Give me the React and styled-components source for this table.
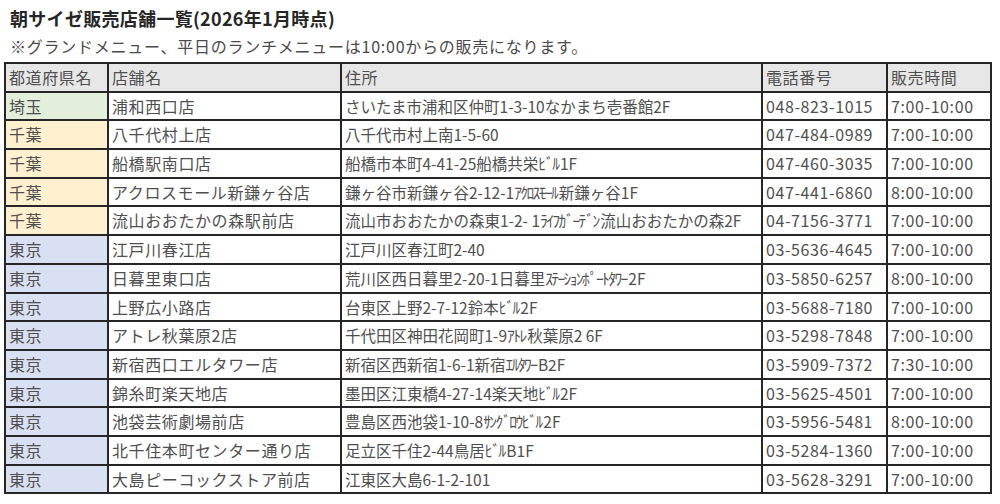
import React from "react";
import styled, { createGlobalStyle } from "styled-components";

const Global = createGlobalStyle`
  html, body { margin: 0; padding: 0; background: #ffffff; }
  body { font-family: "Noto Sans CJK JP", "Noto Sans", sans-serif; }
`;

const Page = styled.div`
  width: 1000px;
  height: 504px;
  box-sizing: border-box;
  padding: 6px 0 0 4px;
  overflow: hidden;
`;

const Title = styled.h1`
  margin: 0 0 0 6px;
  font-size: 18px;
  line-height: 24px;
  font-weight: 700;
  letter-spacing: 0.3px;
  color: #262626;
`;

const Note = styled.p`
  margin: 4px 0 0 6px;
  font-size: 16px;
  line-height: 24px;
  letter-spacing: 0.75px;
  color: #4a4a4a;
`;

const Table = styled.div`
  margin-top: 4px;
  display: grid;
  grid-template-columns: 101px 231px 419px 123px 102px;
  grid-auto-rows: 26.7px;
  gap: 2px;
  padding: 2px;
  width: max-content;
  background: #262626;
`;

const Row = styled.div`
  display: contents;
`;

const bgs = {
  head: "#e8e7e7",
  saitama: "#e3efdb",
  chiba: "#fff1cf",
  tokyo: "#d9e0f1",
  plain: "#ffffff",
};

const Cell = styled.div`
  background: ${(p) => bgs[p.$tone || "plain"]};
  color: #4f4f4f;
  font-size: ${(p) => (p.$compact ? "15.5px" : "16px")};
  line-height: 26.7px;
  letter-spacing: ${(p) => (p.$compact ? "0" : "0.6px")};
  padding-left: 3px;
  white-space: nowrap;
  overflow: hidden;
`;

const HalfKana = styled.span`
  letter-spacing: -1.6px;
  margin-right: 1.6px;
`;

const headers = ["都道府県名", "店舗名", "住所", "電話番号", "販売時間"];

const rows = [
  ["埼玉", "saitama", "浦和西口店", "さいたま市浦和区仲町1-3-10なかまち壱番館2F", "048-823-1015", "7:00-10:00"],
  ["千葉", "chiba", "八千代村上店", "八千代市村上南1-5-60", "047-484-0989", "7:00-10:00"],
  ["千葉", "chiba", "船橋駅南口店", "船橋市本町4-41-25船橋共栄ﾋﾞﾙ1F", "047-460-3035", "7:00-10:00"],
  ["千葉", "chiba", "アクロスモール新鎌ヶ谷店", "鎌ヶ谷市新鎌ヶ谷2-12-1ｱｸﾛｽﾓｰﾙ新鎌ヶ谷1F", "047-441-6860", "8:00-10:00"],
  ["千葉", "chiba", "流山おおたかの森駅前店", "流山市おおたかの森東1-2- 1ﾗｲﾌｶﾞｰﾃﾞﾝ流山おおたかの森2F", "04-7156-3771", "7:00-10:00"],
  ["東京", "tokyo", "江戸川春江店", "江戸川区春江町2-40", "03-5636-4645", "7:00-10:00"],
  ["東京", "tokyo", "日暮里東口店", "荒川区西日暮里2-20-1日暮里ｽﾃｰｼｮﾝﾎﾟｰﾄﾀﾜｰ2F", "03-5850-6257", "8:00-10:00"],
  ["東京", "tokyo", "上野広小路店", "台東区上野2-7-12鈴本ﾋﾞﾙ2F", "03-5688-7180", "7:00-10:00"],
  ["東京", "tokyo", "アトレ秋葉原2店", "千代田区神田花岡町1-9ｱﾄﾚ秋葉原2 6F", "03-5298-7848", "7:00-10:00"],
  ["東京", "tokyo", "新宿西口エルタワー店", "新宿区西新宿1-6-1新宿ｴﾙﾀﾜｰB2F", "03-5909-7372", "7:30-10:00"],
  ["東京", "tokyo", "錦糸町楽天地店", "墨田区江東橋4-27-14楽天地ﾋﾞﾙ2F", "03-5625-4501", "7:00-10:00"],
  ["東京", "tokyo", "池袋芸術劇場前店", "豊島区西池袋1-10-8ｻﾝｸﾞﾛｳﾋﾞﾙ2F", "03-5956-5481", "8:00-10:00"],
  ["東京", "tokyo", "北千住本町センター通り店", "足立区千住2-44鳥居ﾋﾞﾙB1F", "03-5284-1360", "7:00-10:00"],
  ["東京", "tokyo", "大島ピーコックストア前店", "江東区大島6-1-2-101", "03-5628-3291", "7:00-10:00"],
];

function Address({ text }) {
  const parts = text.split(/([\uFF61-\uFF9F]+)/);
  return parts.map((part, i) =>
    /^[\uFF61-\uFF9F]+$/.test(part) ? (
      <HalfKana key={i}>{part}</HalfKana>
    ) : (
      <React.Fragment key={i}>{part}</React.Fragment>
    )
  );
}

export default function App() {
  return (
    <>
      <Global />
      <Page>
        <Title>朝サイゼ販売店舗一覧(2026年1月時点)</Title>
        <Note>※グランドメニュー、平日のランチメニューは10:00からの販売になります。</Note>
        <Table>
          <Row>
            {headers.map((h) => (
              <Cell key={h} $tone="head">{h}</Cell>
            ))}
          </Row>
          {rows.map(([pref, tone, name, addr, tel, time]) => (
            <Row key={name}>
              <Cell $tone={tone}>{pref}</Cell>
              <Cell>{name}</Cell>
              <Cell $compact><Address text={addr} /></Cell>
              <Cell>{tel}</Cell>
              <Cell>{time}</Cell>
            </Row>
          ))}
        </Table>
      </Page>
    </>
  );
}
